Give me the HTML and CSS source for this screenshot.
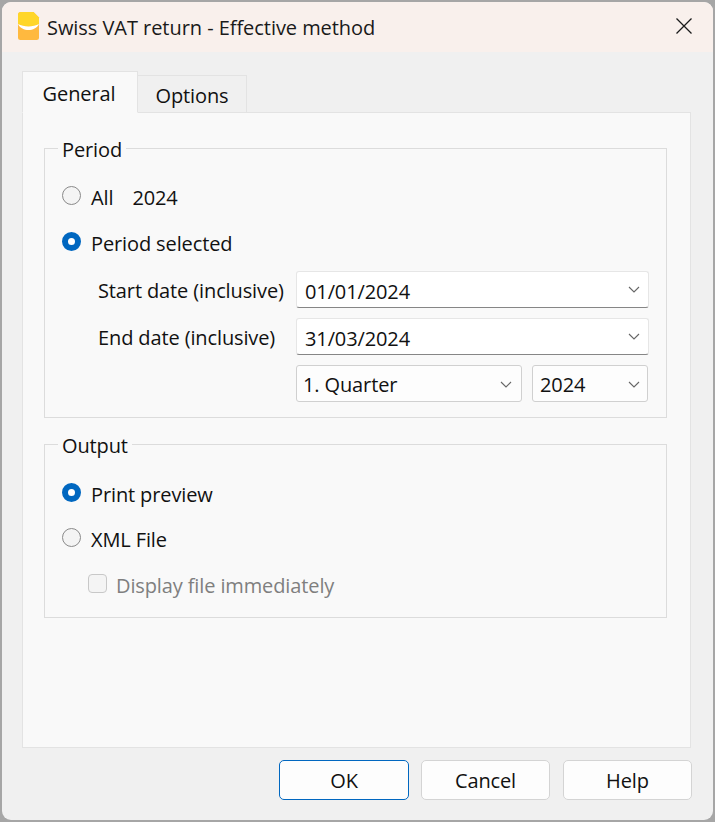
FILE: index.html
```html
<!DOCTYPE html>
<html lang="en">
<head>
  <meta charset="UTF-8">
  <title>Swiss VAT return - Effective method</title>
  <link rel="stylesheet" href="styles.css">
</head>
<body>

  <div class="window">
    <div class="titlebar">
      <svg class="logo" width="22" height="29" viewBox="0 0 22 29">
        <path d="M3 0h12.500l5.500 5.500V25.500a2.500 2.500 0 0 1-2.500 2.500h-16A2.500 2.500 0 0 1 0 25.500V3a3 3 0 0 1 3-3z" fill="#ffb93f"/>
        <path d="M3 0h12.500l5.500 5.500V12c-6 3.300-15 3.300-21 0V3a3 3 0 0 1 3-3z" fill="#ffd629"/>
        <path d="M0 12c6 3.300 15 3.300 21 0c-4 8-17 8-21 0z" fill="#fff"/>
      </svg>
      <span class="title">Swiss VAT return - Effective method</span>
      <svg class="close" width="16" height="16" viewBox="0 0 16 16">
        <path d="M0.500 0.500l15 15M15.500 0.500l-15 15" stroke="#1a1a1a" stroke-width="1.300" fill="none"/>
      </svg>
    </div>

    <div class="content">
      <div class="tabs">
        <div class="tab active">General</div>
        <div class="tab">Options</div>
      </div>

      <div class="pane">
        <fieldset class="group group-period">
          <legend>Period</legend>
          <label class="row first"><input type="radio" name="period"> All <span class="year">2024</span></label>
          <label class="row second"><input type="radio" name="period" checked> Period selected</label>

          <div class="date-row first-date">
            <span class="date-label">Start date (inclusive)</span>
            <div class="combo date"><span>01/01/2024</span>
              <svg class="chevron" width="12" height="7" viewBox="0 0 12 7"><path d="M1 1l5 5 5-5" fill="none" stroke="#666" stroke-width="1.100"/></svg>
            </div>
          </div>
          <div class="date-row">
            <span class="date-label">End date (inclusive)</span>
            <div class="combo date"><span>31/03/2024</span>
              <svg class="chevron" width="12" height="7" viewBox="0 0 12 7"><path d="M1 1l5 5 5-5" fill="none" stroke="#666" stroke-width="1.100"/></svg>
            </div>
          </div>
          <div class="select-row">
            <div class="combo quarter"><span>1. Quarter</span>
              <svg class="chevron" width="12" height="7" viewBox="0 0 12 7"><path d="M1 1l5 5 5-5" fill="none" stroke="#666" stroke-width="1.100"/></svg>
            </div>
            <div class="combo year-select"><span>2024</span>
              <svg class="chevron" width="12" height="7" viewBox="0 0 12 7"><path d="M1 1l5 5 5-5" fill="none" stroke="#666" stroke-width="1.100"/></svg>
            </div>
          </div>
        </fieldset>

        <fieldset class="group group-output">
          <legend>Output</legend>
          <label class="row first-output"><input type="radio" name="output" checked> Print preview</label>
          <label class="row second-output"><input type="radio" name="output"> XML File</label>
          <label class="row check-row"><input type="checkbox" disabled> Display file immediately</label>
        </fieldset>
      </div>

      <div class="buttons">
        <button class="btn default">OK</button>
        <button class="btn">Cancel</button>
        <button class="btn">Help</button>
      </div>
    </div>
  </div>

</body>
</html>
```

FILE: styles.css
```css
html, body {
  margin: 0;
  height: 100%;
}
body {
  background-color: #a6a6a6;
  font-family: "Open Sans", "Noto Sans", sans-serif;
  font-size: 20px;
  letter-spacing: -0.12px;
  color: #111;
  padding: 2px;
  box-sizing: border-box;
  overflow: hidden;
}
.window {
  height: 818px;
  width: 711px;
  background: #f0f0f0;
  border-radius: 9px;
  overflow: hidden;
  display: flex;
  flex-direction: column;
}
.titlebar {
  height: 50px;
  flex: none;
  background: #f9f0ec;
  display: flex;
  align-items: center;
  padding: 0 21px 0 16px;
}
.logo {
  margin-right: 7px;
  margin-top: -1px;
}
.title {
  flex: 1;
  font-size: 20px;
  letter-spacing: -0.05px;
  color: #1a1a1a;
}
.close {
  margin-top: -2px;
}
.content {
  flex: 1;
  display: flex;
  flex-direction: column;
  padding: 20px 22px 0 20px;
}
.tabs {
  display: flex;
  align-items: flex-end;
  height: 41px;
  position: relative;
  z-index: 1;
  margin-bottom: -1px;
}
.tab {
  width: 108px;
  height: 36px;
  text-align: center;
  line-height: 40px;
  background: #f0f0f0;
  border: 1px solid #e3e3e3;
  border-left: none;
}
.tab.active {
  width: 114px;
  height: 40px;
  line-height: 43px;
  background: #f9f9f9;
  border-left: 1px solid #e3e3e3;
  border-bottom: 1px solid #f9f9f9;
  text-indent: -2px;
}
.pane {
  height: 611px;
  background: #f9f9f9;
  border: 1px solid #e3e3e3;
  padding: 23px 23px 0 21px;
}
.group {
  margin: 0;
  padding: 0 16px 15px 16px;
  border: 1px solid #dcdcdc;
  min-width: 0;
}
.group-output {
  margin-top: 14px;
  padding-bottom: 20px;
}
legend {
  margin-left: -3px;
  padding: 0 4px;
  height: 24px;
  line-height: 28px;
}
.row {
  display: flex;
  align-items: center;
  height: 24px;
}
.row.first { margin-top: 25px; }
.row.second { margin-top: 22px; }
.row.first-output { margin-top: 26px; }
.row.second-output { margin-top: 21px; }
.row.check-row {
  margin-top: 22px;
  padding-left: 27px;
  color: #7f7f7f;
}
.year {
  margin-left: 19px;
}
input[type="radio"] {
  appearance: none;
  width: 19px;
  height: 19px;
  margin: -3px 10px 0 1px;
  box-sizing: border-box;
  border: 1px solid #8a8a8a;
  border-radius: 50%;
  background: #f4f4f4;
}
input[type="radio"]:checked {
  border: 6px solid #0067c0;
  background: #fff;
}
input[type="checkbox"] {
  appearance: none;
  width: 19px;
  height: 19px;
  margin: -3px 9px 0 0;
  box-sizing: border-box;
  border: 1px solid #c8c8c8;
  border-radius: 4px;
  background: #f4f4f4;
}
.date-row {
  display: flex;
  align-items: center;
  margin-top: 10px;
}
.date-row.first-date {
  margin-top: 16px;
}
.date-label {
  width: 235px;
  box-sizing: border-box;
  padding: 2px 0 0 37px;
  flex: none;
}
.combo {
  height: 37px;
  box-sizing: border-box;
  background: #fff;
  border: 1px solid #e6e6e6;
  border-radius: 3px;
  display: flex;
  align-items: center;
  justify-content: space-between;
  padding: 3px 9px 0 8px;
}
.combo.date {
  width: 353px;
  border-bottom: 1px solid #868686;
  padding-right: 8px;
}
.select-row {
  display: flex;
  gap: 10px;
  margin-top: 10px;
  margin-left: 235px;
}
.combo.quarter {
  width: 226px;
  border-color: #d0d0d0;
  background: #fdfdfd;
  padding-left: 6px;
  padding-top: 2px;
}
.combo.year-select {
  width: 116px;
  border-color: #d0d0d0;
  background: #fdfdfd;
  padding-right: 7px;
  padding-left: 7px;
  padding-top: 2px;
}
.chevron {
  margin-top: -4px;
}
.select-row .chevron {
  margin-top: -1px;
}
.buttons {
  display: flex;
  justify-content: flex-end;
  gap: 13px;
  margin-top: 12px;
  margin-right: -1px;
}
.btn {
  width: 129px;
  height: 40px;
  font: inherit;
  letter-spacing: inherit;
  color: #111;
  background: #fdfdfd;
  border: 1px solid #d4d4d4;
  border-radius: 5px;
  padding: 0;
}
.btn.default {
  width: 130px;
  margin-right: -1px;
  border-color: #0067c0;
}
```
